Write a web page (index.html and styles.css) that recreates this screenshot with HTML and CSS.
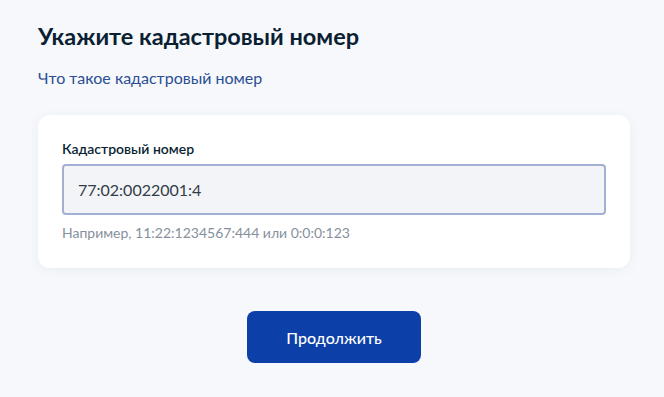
FILE: index.html
```html
<!DOCTYPE html>
<html lang="ru">
<head>
    <meta charset="UTF-8">
    <meta name="viewport" content="width=device-width, initial-scale=1.0">
    <title>Кадастровый номер</title>
    <link rel="stylesheet" href="styles.css">
</head>
<body>
    <div class="page">
        <h1 class="title">Укажите кадастровый номер</h1>
        <a class="help-link" href="#">Что такое кадастровый номер</a>

        <div class="card">
            <label class="field-label" for="cadastral">Кадастровый номер</label>
            <input class="field-input" id="cadastral" type="text" value="77:02:0022001:4">
            <div class="field-hint">Например, 11:22:1234567:444 или 0:0:0:123</div>
        </div>

        <div class="actions">
            <button class="primary-button">Продолжить</button>
        </div>
    </div>
</body>
</html>
```

FILE: styles.css
```css
body {
    margin: 0;
    background-color: #f6f8fb;
    font-family: Lato, "Noto Sans", sans-serif;
    color: #0b1f33;
}

.page {
    padding: 20px 34px 0 38px;
}

.title {
    margin: 0;
    font-size: 23.5px;
    line-height: 32px;
    font-weight: 700;
    color: #0b1f33;
}

.help-link {
    display: inline-block;
    margin-top: 16px;
    font-size: 16px;
    line-height: 20px;
    color: #2b4e94;
    text-decoration: none;
}

.card {
    margin-top: 27px;
    padding: 24px 24px 25px;
    background-color: #fff;
    border-radius: 12px;
    box-shadow: 0 2px 12px rgba(25, 60, 130, 0.06);
    display: flex;
    flex-direction: column;
}

.field-label {
    font-size: 14px;
    line-height: 20px;
    font-weight: 600;
    color: #0b1f33;
}

.field-input {
    margin-top: 5px;
    height: 51px;
    box-sizing: border-box;
    padding: 0 14px;
    border: 2px solid #a3b0d4;
    border-radius: 4px;
    background-color: #f2f4f7;
    font-family: Lato, "Noto Sans", sans-serif;
    font-size: 16px;
    color: #333c47;
    outline: none;
}

.field-hint {
    margin-top: 8px;
    font-size: 14px;
    line-height: 20px;
    color: #86909c;
}

.actions {
    display: flex;
    justify-content: center;
    margin-top: 43px;
}

.primary-button {
    width: 174px;
    height: 52px;
    border: none;
    border-radius: 8px;
    background-color: #0d3fa8;
    color: #fff;
    font-family: Lato, "Noto Sans", sans-serif;
    font-size: 16px;
    font-weight: 500;
    cursor: pointer;
}
```
